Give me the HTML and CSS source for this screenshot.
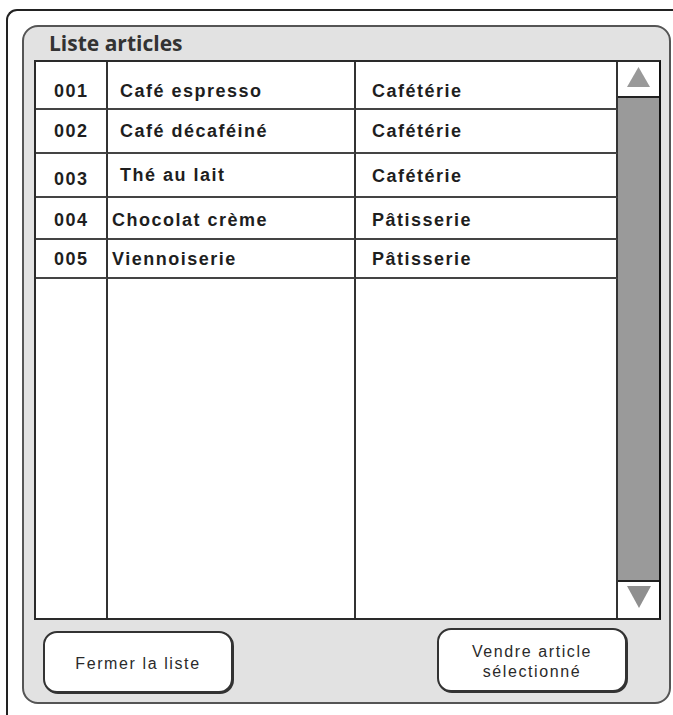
FILE: index.html
```html
<!DOCTYPE html>
<html lang="fr">
<head>
<meta charset="utf-8">
<title>Liste articles</title>
<link rel="stylesheet" href="styles.css">
</head>
<body>
<div class="window">
  <div class="panel">
    <div class="title">Liste articles</div>
    <div class="table">
      <div class="data">
        <div class="cell code r1">001</div>
        <div class="cell name r1 indent">Café espresso</div>
        <div class="cell cat r1">Cafétérie</div>

        <div class="cell code r2">002</div>
        <div class="cell name r2 indent">Café décaféiné</div>
        <div class="cell cat r2">Cafétérie</div>

        <div class="cell code r3 low">003</div>
        <div class="cell name r3 indent">Thé au lait</div>
        <div class="cell cat r3 mid">Cafétérie</div>

        <div class="cell code r4">004</div>
        <div class="cell name r4">Chocolat crème</div>
        <div class="cell cat r4">Pâtisserie</div>

        <div class="cell code r5">005</div>
        <div class="cell name r5">Viennoiserie</div>
        <div class="cell cat r5">Pâtisserie</div>

        <div class="cell fill"></div>
        <div class="cell fill"></div>
        <div class="cell fill"></div>
      </div>
      <div class="scroll">
        <div class="arrow up">
          <svg width="23" height="20" viewBox="0 0 23 20"><polygon points="11.5,0 23,20 0,20" fill="#999"/></svg>
        </div>
        <div class="track"></div>
        <div class="arrow down">
          <svg width="24" height="22" viewBox="0 0 24 22"><polygon points="0,0 24,0 12,22" fill="#8f8f8f"/></svg>
        </div>
      </div>
    </div>
    <div class="actions">
      <button class="btn close">Fermer la liste</button>
      <button class="btn sell">Vendre article<br>sélectionné</button>
    </div>
  </div>
</div>
</body>
</html>
```

FILE: styles.css
```css
* { box-sizing: border-box; }

html, body {
  margin: 0;
  padding: 0;
  background: #ffffff;
  overflow: hidden;
}

body {
  width: 673px;
  height: 715px;
  font-family: "Liberation Sans", Arial, sans-serif;
  color: #222;
}

.window {
  margin: 9px 0 0 6px;
  height: 720px;
  border-top: 2px solid #222;
  border-left: 2px solid #222;
  border-top-left-radius: 11px;
  padding: 14px 0 0 14px;
}

.panel {
  width: 649px;
  height: 679px;
  background: #e2e2e2;
  border: 2px solid #555;
  border-radius: 16px;
  display: flex;
  flex-direction: column;
}

.title {
  height: 33px;
  line-height: 33px;
  padding-left: 25px;
  font-family: "Open Sans", sans-serif;
  font-weight: 700;
  font-size: 21px;
  color: #333;
}

.table {
  margin: 0 8px 0 10px;
  height: 560px;
  border: 2px solid #2a2a2a;
  border-right-color: #111;
  background: #fff;
  display: flex;
}

.data {
  width: 582px;
  display: grid;
  grid-template-columns: 72px 248px 262px;
  grid-template-rows: 48px 44px 44px 42px 39px 1fr;
}

.cell {
  border-right: 2px solid #333;
  border-bottom: 2px solid #444;
  font-weight: 700;
  font-size: 18px;
  letter-spacing: 1.5px;
  line-height: 20px;
  color: #1e1e1e;
  white-space: nowrap;
}

.cell.fill { border-bottom: none; }

.code { padding-left: 18px; }
.name { padding-left: 4px; }
.name.indent { padding-left: 12px; }
.cat { padding-left: 16px; }

.r1 { padding-top: 19px; }
.r2 { padding-top: 11px; }
.r3 { padding-top: 11px; }
.r3.low { padding-top: 15px; }
.r3.mid { padding-top: 12px; }
.r4 { padding-top: 12px; }
.r5 { padding-top: 9px; }

.scroll {
  width: 41px;
  display: flex;
  flex-direction: column;
}

.arrow {
  background: #fff;
  display: flex;
  align-items: center;
  justify-content: center;
}

.arrow.up {
  height: 36px;
  border-bottom: 2px solid #222;
  padding-bottom: 4px;
}

.arrow.down {
  height: 38px;
  border-top: 2px solid #222;
  padding-bottom: 6px;
}

.track {
  flex: 1;
  background: #9a9a9a;
}

.actions {
  flex: 1;
  display: flex;
  justify-content: space-between;
  align-items: flex-start;
  padding: 0 42px 0 19px;
}

.btn {
  width: 190px;
  background: #fff;
  border: 2px solid #333;
  border-radius: 14px;
  box-shadow: 1px 1px 0 #333;
  font-family: "Liberation Sans", Arial, sans-serif;
  font-size: 16px;
  letter-spacing: 1.6px;
  line-height: 20px;
  color: #2a2a2a;
  text-align: center;
}

.btn.close {
  height: 62px;
  margin-top: 11px;
  padding: 3px 0 0;
}

.btn.sell {
  height: 64px;
  margin-top: 8px;
  padding: 4px 0 0;
}
```
